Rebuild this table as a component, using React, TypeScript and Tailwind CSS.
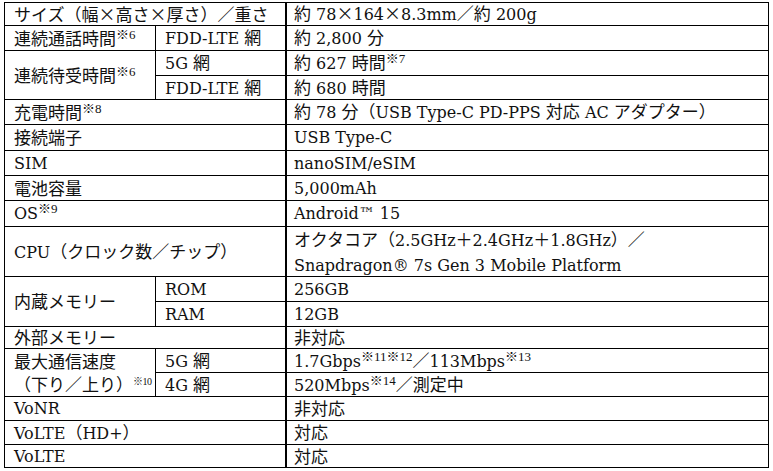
import React from "react";

const CJK = /([\u3000-\u303f\u3040-\u30ff\u4e00-\u9fff\uff00-\uffef×]+)/;

function T({ s }: { s: string }) {
  const parts = s.split(CJK).filter((p) => p.length > 0);
  return (
    <>
      {parts.map((p, i) => {
        if (CJK.test(p)) {
          const chars = p.split(/(×)/).filter((c) => c.length > 0);
          return (
            <span key={i} className="font-['Noto_Sans_CJK_JP',sans-serif] text-[17px]">
              {chars.map((c, j) =>
                c === "×" ? (
                  <span key={j} className="inline-block w-[17px] text-center">
                    ×
                  </span>
                ) : (
                  <React.Fragment key={j}>{c}</React.Fragment>
                )
              )}
            </span>
          );
        }
        return (
          <span key={i} className="font-['DejaVu_Serif',serif] text-[16px]">
            {p}
          </span>
        );
      })}
    </>
  );
}

const Sup = ({ s, className = "" }: { s: string; className?: string }) => (
  <span
    className={
      "text-[13px] leading-none align-[6px] font-['Liberation_Serif','Noto_Sans_CJK_JP',serif] " +
      className
    }
  >
    {s}
  </span>
);

const L = ({
  children,
  className = "",
}: {
  children: React.ReactNode;
  className?: string;
}) => (
  <div className={"bg-white flex items-center pl-[9px] whitespace-pre " + className}>
    <span>{children}</span>
  </div>
);

const V = ({
  children,
  className = "",
}: {
  children: React.ReactNode;
  className?: string;
}) => (
  <div
    className={
      "bg-white flex items-center pl-[7px] whitespace-pre border-l border-black " + className
    }
  >
    <span>{children}</span>
  </div>
);

export default function App() {
  return (
    <div className="w-[773px] h-[471px] bg-white pt-[2px] pl-[4px]">
      <div className="w-[765px] bg-black p-px grid gap-px grid-cols-[150px_129px_1fr] grid-rows-[22px_24px_24px_23px_24px_25px_24px_24px_25px_49px_24px_24px_21px_23px_23px_23px_23px_22px] text-[17px] leading-[24px] text-[#111] font-['DejaVu_Serif','Noto_Sans_CJK_JP',serif]">
        {/* 1 */}
        <L className="col-span-2">
          <T s="サイズ（幅×高さ×厚さ）／重さ" />
        </L>
        <V>
          <T s="約 78×164×8.3mm／約 200g" />
        </V>
        {/* 2 */}
        <L>
          <T s="連続通話時間" />
          <Sup s="※6" />
        </L>
        <L>
          <T s="FDD-LTE 網" />
        </L>
        <V>
          <T s="約 2,800 分" />
        </V>
        {/* 3-4 */}
        <L className="row-span-2">
          <T s="連続待受時間" />
          <Sup s="※6" />
        </L>
        <L>
          <T s="5G 網" />
        </L>
        <V>
          <T s="約 627 時間" />
          <Sup s="※7" />
        </V>
        <L>
          <T s="FDD-LTE 網" />
        </L>
        <V>
          <T s="約 680 時間" />
        </V>
        {/* 5 */}
        <L className="col-span-2">
          <T s="充電時間" />
          <Sup s="※8" />
        </L>
        <V>
          <T s="約 78 分（USB Type-C PD-PPS 対応 AC アダプター）" />
        </V>
        {/* 6 */}
        <L className="col-span-2">
          <T s="接続端子" />
        </L>
        <V>
          <T s="USB Type-C" />
        </V>
        {/* 7 */}
        <L className="col-span-2">
          <T s="SIM" />
        </L>
        <V>
          <T s="nanoSIM/eSIM" />
        </V>
        {/* 8 */}
        <L className="col-span-2">
          <T s="電池容量" />
        </L>
        <V>
          <T s="5,000mAh" />
        </V>
        {/* 9 */}
        <L className="col-span-2">
          <T s="OS" />
          <Sup s="※9" />
        </L>
        <V>
          <T s="Android™ 15" />
        </V>
        {/* 10 */}
        <L className="col-span-2">
          <T s="CPU（クロック数／チップ）" />
        </L>
        <div className="bg-white flex flex-col justify-center pl-[7px] whitespace-pre border-l border-black leading-[25px]">
          <span>
            <T s="オクタコア（2.5GHz＋2.4GHz＋1.8GHz）／" />
          </span>
          <span>
            <T s="Snapdragon® 7s Gen 3 Mobile Platform" />
          </span>
        </div>
        {/* 11-12 */}
        <L className="row-span-2">
          <T s="内蔵メモリー" />
        </L>
        <L>
          <T s="ROM" />
        </L>
        <V>
          <T s="256GB" />
        </V>
        <L>
          <T s="RAM" />
        </L>
        <V>
          <T s="12GB" />
        </V>
        {/* 13 */}
        <L className="col-span-2">
          <T s="外部メモリー" />
        </L>
        <V>
          <T s="非対応" />
        </V>
        {/* 14-15 */}
        <div className="row-span-2 bg-white flex flex-col justify-center pl-[9px] whitespace-pre leading-[22px]">
          <span>
            <T s="最大通信速度" />
          </span>
          <span>
            <T s="（下り／上り）" />
            <Sup s="※10" className="!text-[10px] tracking-tighter" />
          </span>
        </div>
        <L>
          <T s="5G 網" />
        </L>
        <V>
          <T s="1.7Gbps" />
          <Sup s="※11※12" />
          <T s="／113Mbps" />
          <Sup s="※13" />
        </V>
        <L>
          <T s="4G 網" />
        </L>
        <V>
          <T s="520Mbps" />
          <Sup s="※14" />
          <T s="／測定中" />
        </V>
        {/* 16 */}
        <L className="col-span-2">
          <T s="VoNR" />
        </L>
        <V>
          <T s="非対応" />
        </V>
        {/* 17 */}
        <L className="col-span-2">
          <T s="VoLTE（HD+）" />
        </L>
        <V>
          <T s="対応" />
        </V>
        {/* 18 */}
        <L className="col-span-2">
          <T s="VoLTE" />
        </L>
        <V>
          <T s="対応" />
        </V>
      </div>
    </div>
  );
}
